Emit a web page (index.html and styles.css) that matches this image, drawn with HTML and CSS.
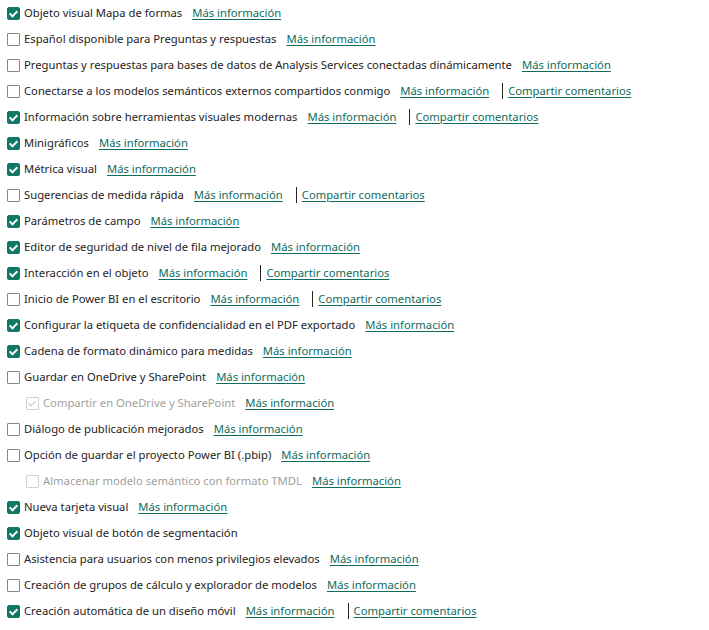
FILE: index.html
```html
<!DOCTYPE html>
<html lang="es">
<head>
<meta charset="utf-8">
<link rel="stylesheet" href="styles.css">
</head>
<body>
<ul class="list">
  <li class="row"><span class="box on"></span><span class="label">Objeto visual Mapa de formas</span><a class="link">Más información</a></li>
  <li class="row"><span class="box"></span><span class="label">Español disponible para Preguntas y respuestas</span><a class="link">Más información</a></li>
  <li class="row"><span class="box"></span><span class="label">Preguntas y respuestas para bases de datos de Analysis Services conectadas dinámicamente</span><a class="link">Más información</a></li>
  <li class="row"><span class="box"></span><span class="label">Conectarse a los modelos semánticos externos compartidos conmigo</span><a class="link">Más información</a><span class="sep"></span><a class="link">Compartir comentarios</a></li>
  <li class="row"><span class="box on"></span><span class="label">Información sobre herramientas visuales modernas</span><a class="link">Más información</a><span class="sep"></span><a class="link">Compartir comentarios</a></li>
  <li class="row"><span class="box on"></span><span class="label">Minigráficos</span><a class="link">Más información</a></li>
  <li class="row"><span class="box on"></span><span class="label">Métrica visual</span><a class="link">Más información</a></li>
  <li class="row"><span class="box"></span><span class="label">Sugerencias de medida rápida</span><a class="link">Más información</a><span class="sep"></span><a class="link">Compartir comentarios</a></li>
  <li class="row"><span class="box on"></span><span class="label">Parámetros de campo</span><a class="link">Más información</a></li>
  <li class="row"><span class="box on"></span><span class="label">Editor de seguridad de nivel de fila mejorado</span><a class="link">Más información</a></li>
  <li class="row"><span class="box on"></span><span class="label">Interacción en el objeto</span><a class="link">Más información</a><span class="sep"></span><a class="link">Compartir comentarios</a></li>
  <li class="row"><span class="box"></span><span class="label">Inicio de Power BI en el escritorio</span><a class="link">Más información</a><span class="sep"></span><a class="link">Compartir comentarios</a></li>
  <li class="row"><span class="box on"></span><span class="label">Configurar la etiqueta de confidencialidad en el PDF exportado</span><a class="link">Más información</a></li>
  <li class="row"><span class="box on"></span><span class="label">Cadena de formato dinámico para medidas</span><a class="link">Más información</a></li>
  <li class="row"><span class="box"></span><span class="label">Guardar en OneDrive y SharePoint</span><a class="link">Más información</a></li>
  <li class="row sub"><span class="box dis-on"></span><span class="label dim">Compartir en OneDrive y SharePoint</span><a class="link">Más información</a></li>
  <li class="row"><span class="box"></span><span class="label">Diálogo de publicación mejorados</span><a class="link">Más información</a></li>
  <li class="row"><span class="box"></span><span class="label">Opción de guardar el proyecto Power BI (.pbip)</span><a class="link">Más información</a></li>
  <li class="row sub"><span class="box dis"></span><span class="label dim">Almacenar modelo semántico con formato TMDL</span><a class="link">Más información</a></li>
  <li class="row"><span class="box on"></span><span class="label">Nueva tarjeta visual</span><a class="link">Más información</a></li>
  <li class="row"><span class="box on"></span><span class="label">Objeto visual de botón de segmentación</span></li>
  <li class="row"><span class="box"></span><span class="label">Asistencia para usuarios con menos privilegios elevados</span><a class="link">Más información</a></li>
  <li class="row"><span class="box"></span><span class="label">Creación de grupos de cálculo y explorador de modelos</span><a class="link">Más información</a></li>
  <li class="row"><span class="box on"></span><span class="label">Creación automática de un diseño móvil</span><a class="link">Más información</a><span class="sep"></span><a class="link">Compartir comentarios</a></li>
</ul>
</body>
</html>
```
FILE: styles.css
```css
html, body {
  margin: 0;
  padding: 0;
  background: #ffffff;
}
body {
  font-family: "Noto Sans", "Open Sans", sans-serif;
  font-size: 11.25px;
  color: #252423;
}
.list {
  list-style: none;
  margin: 0;
  padding: 0 0 0 7px;
}
.row {
  display: flex;
  align-items: center;
  height: 26px;
  white-space: nowrap;
}
.row.sub {
  padding-left: 19px;
}
.label, .link {
  margin-bottom: 2px;
}
.box {
  position: relative;
  box-sizing: border-box;
  width: 13px;
  height: 13px;
  border: 1px solid #8a8886;
  border-radius: 1px;
  margin-right: 4px;
  flex: none;
}
.box.on {
  background: #117865;
  border-color: #117865;
  border-radius: 2px;
}
.box.on::after,
.box.dis-on::after {
  content: "";
  position: absolute;
  left: 3px;
  top: 1px;
  width: 3px;
  height: 6px;
  border-right: 2px solid #ffffff;
  border-bottom: 2px solid #ffffff;
  transform: rotate(45deg);
}
.box.dis, .box.dis-on {
  border-color: #d2d0ce;
}
.box.dis-on::after {
  border-right: 1px solid #c8c6c4;
  border-bottom: 1px solid #c8c6c4;
}
.label.dim {
  color: #a19f9d;
}
.link {
  color: #0f6b5c;
  text-decoration: underline;
  text-underline-offset: 2px;
  margin-left: 10px;
}
.sep {
  width: 1px;
  height: 16px;
  background: #252423;
  margin: 0 2px 0 13px;
}
.sep + .link {
  margin-left: 3px;
}
```
